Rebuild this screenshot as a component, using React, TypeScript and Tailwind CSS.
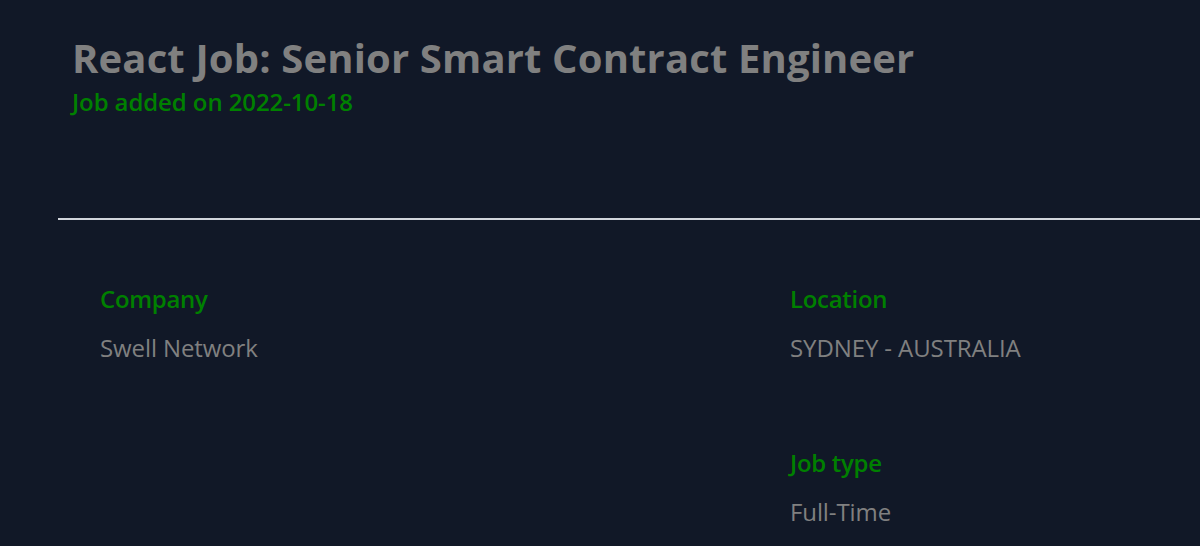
import React from "react";

const font = { fontFamily: '"Open Sans", "Noto Sans", sans-serif' };

function Field({ label, value }: { label: string; value: string }) {
  return (
    <div className="flex flex-col">
      <div className="text-[24px] leading-[32px] font-semibold text-[#008000] tracking-[-0.3px]">{label}</div>
      <div className="mt-[17px] text-[24px] leading-[32px] text-[#808080] tracking-[-0.1px]">{value}</div>
    </div>
  );
}

export default function App() {
  return (
    <div className="min-h-[546px] w-[1200px] overflow-hidden bg-[#111827]" style={font}>
      <div className="pl-[72px] pt-[32px]">
        <h1 className="text-[40px] leading-[52px] font-bold text-[#808080] tracking-[0.15px]">
          React Job: Senior Smart Contract Engineer
        </h1>
        <div className="mt-[5px] text-[24px] leading-[26px] font-semibold text-[#008000] tracking-[-0.1px]">
          Job added on 2022-10-18
        </div>
      </div>
      <div className="ml-[58px] mt-[103px] h-[1.5px] bg-[#d1d5db]" />
      <div className="grid grid-cols-[690px_1fr] pl-[100px] pt-[63px]">
        <Field label="Company" value="Swell Network" />
        <div className="flex flex-col gap-[83px]">
          <Field label="Location" value="SYDNEY - AUSTRALIA" />
          <Field label="Job type" value="Full-Time" />
        </div>
      </div>
    </div>
  );
}
